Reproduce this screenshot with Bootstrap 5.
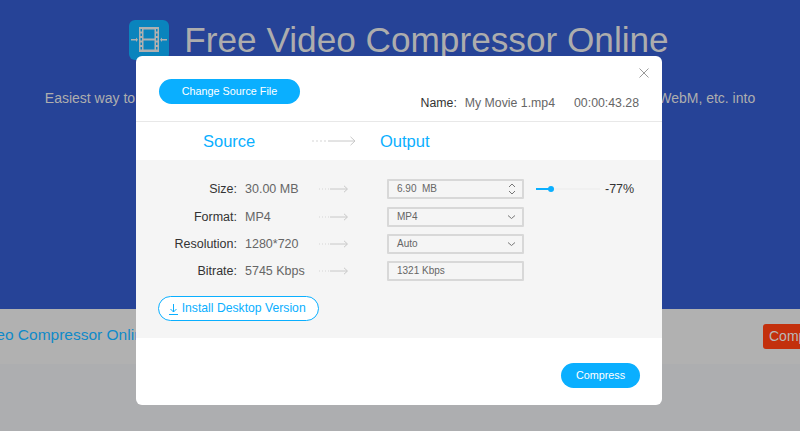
<!DOCTYPE html>
<html lang="en">
<head>
  <meta charset="UTF-8">
  <title>Free Video Compressor Online</title>
  <meta name="viewport" content="width=device-width, initial-scale=1" />
  <link href="https://cdn.jsdelivr.net/npm/bootstrap@5.3.2/dist/css/bootstrap.min.css" rel="stylesheet">
  <style>
    html, body { height: 431px; overflow: hidden; }
    body {
      background: #adaeb0;
      font-family: "Liberation Sans", Arial, sans-serif;
      position: relative;
    }
    .hero-area {
      background: #264397;
      height: 309px;
      padding-top: 20px;
      color: #b0b0b0;
      overflow: hidden;
    }
    .hero-head { margin-left: -2px; }
    .logo-box {
      width: 40px;
      height: 40px;
      background: #0a84bd;
      border-radius: 6px;
      flex: none;
    }
    .hero-title {
      font-size: 35.200px;
      line-height: 40px;
      font-weight: 400;
      margin: 0 0 0 15px;
      color: #adadad;
    }
    .hero-sub {
      font-size: 14px;
      line-height: 18px;
      margin: 29px 0 0;
      text-align: center;
      white-space: nowrap;
      color: #aeaeae;
    }
    .tool-bar {
      height: 55px;
      background: #b1b1b1;
      overflow: hidden;
    }
    .tool-name {
      font-size: 15.500px;
      color: #0f8ac9;
      white-space: nowrap;
      margin: -3px 0 0 -62px;
    }
    .tool-btn {
      background: #c3300d;
      color: #b9b9b9;
      font-size: 14px;
      line-height: 25px;
      height: 25px;
      width: 80px;
      padding: 0 6px;
      border-radius: 3px;
      margin-left: auto;
      margin-right: -43px;
      flex: none;
    }
    .dim-wrap {
      position: absolute;
      left: 136px;
      top: 56px;
      width: 526px;
    }
    .dim-wrap .modal-content {
      background: #fff;
      border: 0;
      border-radius: 6px;
      height: 349px;
      overflow: hidden;
      position: relative;
    }
    .pill-btn {
      background: #0aafff;
      color: #fff;
      border: 0;
      border-radius: 13px;
      font-size: 10.800px;
      height: 25px;
      padding: 0;
    }
    .pill-btn:hover { background: #0aafff; color: #fff; }
    .change-btn { width: 141px; }
    .x-btn {
      position: absolute;
      top: 12px;
      right: 13px;
      width: 10px;
      height: 10px;
      line-height: 0;
    }
    .top-part {
      height: 66px;
      padding: 23px 23px 0;
      border-bottom: 1px solid #e8e8e8;
    }
    .name-info {
      font-size: 12.300px;
      line-height: 14px;
      color: #666;
      margin: 17px 0 0 auto;
    }
    .name-info b { font-weight: 400; color: #333; margin-right: 8px; }
    .name-info span + span { margin-left: 19px; }
    .tab-line {
      height: 38px;
      font-size: 16.500px;
      color: #0aafff;
      padding-left: 67px;
    }
    .tab-line .first-tab { width: 109px; }
    .tab-line svg { margin-right: 24px; }
    .gray-part {
      background: #f5f5f5;
      height: 178px;
      padding-top: 19px;
      font-size: 12.500px;
    }
    .opt-row { height: 20px; }
    .opt-row + .opt-row { margin-top: 7px; }
    .opt-row.first-gap { margin-top: 8px; }
    .opt-label { width: 101px; text-align: right; color: #333; flex: none; }
    .opt-val { width: 74px; margin-left: 8px; color: #666; flex: none; white-space: nowrap; }
    .opt-box {
      width: 137px;
      height: 20px;
      margin-left: 39px;
      border: 2px solid #d8d8d8;
      background: #f5f5f5;
      color: #666;
      font-size: 10px;
      line-height: 16px;
      padding: 0 0 0 8px;
      border-radius: 1px;
      flex: none;
      position: relative;
    }
    .opt-box svg { position: absolute; right: 6px; top: 50%; transform: translateY(-50%); }
    .mini-slider {
      width: 64px;
      height: 2px;
      margin-left: 12px;
      background: #f0f0f0;
      position: relative;
      flex: none;
    }
    .mini-slider i {
      display: block;
      height: 2px;
      background: #0aafff;
    }
    .mini-slider u {
      position: absolute;
      left: 12px;
      top: -2px;
      width: 6px;
      height: 6px;
      border-radius: 50%;
      background: #0aafff;
    }
    .pct-txt { margin-left: 5px; font-size: 12.500px; color: #333; }
    .install-btn {
      margin: 15px 0 0 22px;
      width: 161px;
      height: 25px;
      border: 1px solid #0aafff;
      border-radius: 13px;
      color: #0aafff;
      background: #fff;
      font-size: 12.200px;
      padding: 0 2px 0 0;
    }
    .install-btn:hover { color: #0aafff; background: #fff; }
    .foot-part { padding: 25px 22px 0 0; }
    .compress-btn { width: 79px; }
  </style>
</head>
<body>

<div class="hero-area">
  <div class="hero-head d-flex justify-content-center align-items-center">
    <div class="logo-box">
      <svg width="40" height="40" viewBox="0 0 40 40">
        <rect x="10" y="7" width="20" height="25" fill="#b0b0b0"/>
        <path d="M14.500 9.500h11v9h-11zM14.500 20.500h11v9h-11z" fill="#0a84bd"/>
        <path d="M11.500 9h1.500v2.500h-1.500zM11.500 13.500h1.500V16h-1.500zM11.500 18h1.500v2.500h-1.500zM11.500 22.500h1.500V25h-1.500zM11.500 27h1.500v2.500h-1.500zM27 9h1.500v2.500H27zM27 13.500h1.500V16H27zM27 18h1.500v2.500H27zM27 22.500h1.500V25H27zM27 27h1.500v2.500H27z" fill="#0a84bd"/>
        <path d="M2 19h5v-1.500l2 2.250-2 2.250V20.500H2zM38 19h-5v-1.500l-2 2.250 2 2.250V20.500h5z" fill="#b0b0b0"/>
      </svg>
    </div>
    <h1 class="hero-title">Free Video Compressor Online</h1>
  </div>
  <p class="hero-sub">Easiest way to compress all large video files in MP4, MOV, AVI, MKV, WMV, FLV, 3GP, MTS, VOB, WebM, etc. into</p>
</div>

<div class="tool-bar d-flex align-items-center">
  <span class="tool-name">Free Video Compressor Online</span>
  <span class="tool-btn">Compress</span>
</div>

<div class="dim-wrap">
  <div class="modal-content">
    <span class="x-btn">
      <svg width="10" height="10" viewBox="0 0 10 10" fill="none" stroke="#9a9a9a"><path d="M.5 .5l9 9M9.500 .5l-9 9"/></svg>
    </span>

    <div class="top-part d-flex align-items-start">
      <button class="btn pill-btn change-btn">Change Source File</button>
      <div class="name-info">
        <b>Name:</b><span>My Movie 1.mp4</span><span>00:00:43.28</span>
      </div>
    </div>

    <div class="tab-line d-flex align-items-center">
      <span class="first-tab">Source</span>
      <svg width="44" height="10" viewBox="0 0 44 10" fill="none" stroke="#c8c8c8"><path d="M0 5h2M4 5h2M8 5h2M12 5h2" stroke="#d5d5d5"/><path d="M16 5h27M38.500 .8L43 5l-4.500 4.200"/></svg>
      <span>Output</span>
    </div>

    <div class="gray-part">
      <div class="opt-row d-flex align-items-center">
        <span class="opt-label">Size:</span>
        <span class="opt-val">30.00 MB</span>
        <svg width="29" height="8" viewBox="0 0 29 8" fill="none" stroke="#c8c8c8"><path d="M0 4h1M3 4h1M6 4h1M9 4h1" stroke="#d5d5d5"/><path d="M11 4h17M25 .8L28.500 4 25 7.200"/></svg>
        <div class="opt-box">6.90&nbsp; MB
          <svg width="8" height="13" viewBox="0 0 8 13" fill="none" stroke="#777"><path d="M1 4.500L4 1.500l3 3M1 8.500l3 3 3-3"/></svg>
        </div>
        <div class="mini-slider"><i style="width:15px"></i><u></u></div>
        <span class="pct-txt">-77%</span>
      </div>
      <div class="opt-row first-gap d-flex align-items-center">
        <span class="opt-label">Format:</span>
        <span class="opt-val">MP4</span>
        <svg width="29" height="8" viewBox="0 0 29 8" fill="none" stroke="#c8c8c8"><path d="M0 4h1M3 4h1M6 4h1M9 4h1" stroke="#d5d5d5"/><path d="M11 4h17M25 .8L28.500 4 25 7.200"/></svg>
        <div class="opt-box">MP4
          <svg width="9" height="5" viewBox="0 0 9 5" fill="none" stroke="#777"><path d="M1 1l3.500 3L8 1"/></svg>
        </div>
      </div>
      <div class="opt-row d-flex align-items-center">
        <span class="opt-label">Resolution:</span>
        <span class="opt-val">1280*720</span>
        <svg width="29" height="8" viewBox="0 0 29 8" fill="none" stroke="#c8c8c8"><path d="M0 4h1M3 4h1M6 4h1M9 4h1" stroke="#d5d5d5"/><path d="M11 4h17M25 .8L28.500 4 25 7.200"/></svg>
        <div class="opt-box">Auto
          <svg width="9" height="5" viewBox="0 0 9 5" fill="none" stroke="#777"><path d="M1 1l3.500 3L8 1"/></svg>
        </div>
      </div>
      <div class="opt-row d-flex align-items-center">
        <span class="opt-label">Bitrate:</span>
        <span class="opt-val">5745 Kbps</span>
        <svg width="29" height="8" viewBox="0 0 29 8" fill="none" stroke="#c8c8c8"><path d="M0 4h1M3 4h1M6 4h1M9 4h1" stroke="#d5d5d5"/><path d="M11 4h17M25 .8L28.500 4 25 7.200"/></svg>
        <div class="opt-box">1321 Kbps</div>
      </div>
      <button class="btn install-btn">
        <svg width="9" height="11" viewBox="0 0 9 11" fill="none" stroke="#0aafff"><path d="M4.500 0v8M1.500 5l3 3 3-3M0 10.500h9"/></svg>
        Install Desktop Version
      </button>
    </div>

    <div class="foot-part d-flex justify-content-end">
      <button class="btn pill-btn compress-btn">Compress</button>
    </div>
  </div>
</div>

<script src="https://cdn.jsdelivr.net/npm/bootstrap@5.3.2/dist/js/bootstrap.bundle.min.js"></script>
</body>
</html>
